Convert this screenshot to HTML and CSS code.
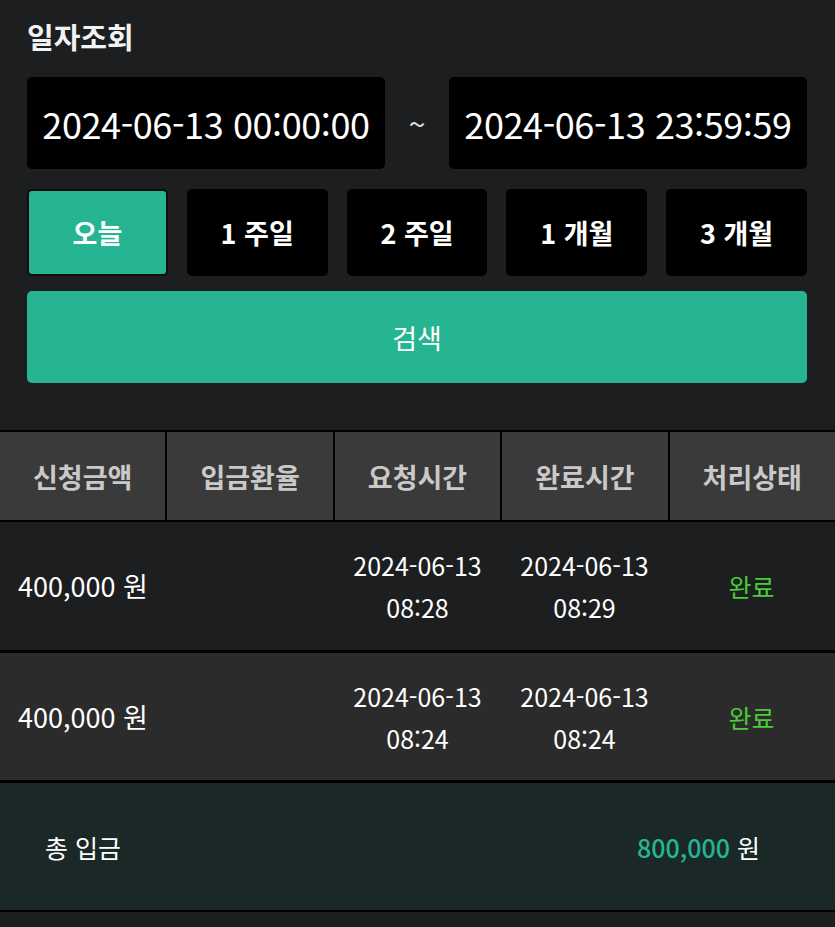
FILE: index.html
```html
<!DOCTYPE html>
<html lang="ko">
<head>
<meta charset="utf-8">
<link rel="stylesheet" href="styles.css">
</head>
<body>
<div class="page">
  <section class="filter">
    <h1 class="title">일자조회</h1>
    <div class="range">
      <div class="date-box">2024-06-13 00:00:00</div>
      <div class="tilde">~</div>
      <div class="date-box">2024-06-13 23:59:59</div>
    </div>
    <div class="periods">
      <button class="period active">오늘</button>
      <button class="period">1 주일</button>
      <button class="period">2 주일</button>
      <button class="period">1 개월</button>
      <button class="period">3 개월</button>
    </div>
    <button class="search">검색</button>
  </section>

  <section class="table">
    <div class="head">
      <div class="hcell">신청금액</div>
      <div class="hcell">입금환율</div>
      <div class="hcell">요청시간</div>
      <div class="hcell">완료시간</div>
      <div class="hcell">처리상태</div>
    </div>
    <div class="row">
      <div class="cell amount">400,000 원</div>
      <div class="cell"></div>
      <div class="cell time">2024-06-13<br>08:28</div>
      <div class="cell time">2024-06-13<br>08:29</div>
      <div class="cell status">완료</div>
    </div>
    <div class="row alt">
      <div class="cell amount">400,000 원</div>
      <div class="cell"></div>
      <div class="cell time">2024-06-13<br>08:24</div>
      <div class="cell time">2024-06-13<br>08:24</div>
      <div class="cell status">완료</div>
    </div>
    <div class="total">
      <div class="total-label">총 입금</div>
      <div class="total-value"><span class="num">800,000</span> 원</div>
    </div>
  </section>
</div>
</body>
</html>
```

FILE: styles.css
```css
* { box-sizing: border-box; }
html, body {
  margin: 0;
  padding: 0;
  background: #1c1e20;
}
body {
  font-family: "Noto Sans CJK KR", "Noto Sans", sans-serif;
  color: #ffffff;
  width: 835px;
  min-height: 927px;
}
.filter {
  padding: 18px 28px 0 27px;
}
.title {
  margin: 0;
  font-size: 29px;
  font-weight: 700;
  line-height: 36px;
  color: #f2f2f2;
}
.range {
  margin-top: 23px;
  display: flex;
  align-items: center;
}
.date-box {
  width: 358px;
  height: 92px;
  background: #000;
  border-radius: 5px;
  display: flex;
  align-items: center;
  justify-content: center;
  font-size: 36px;
  letter-spacing: -0.4px;
  color: #fff;
}
.tilde {
  flex: 1;
  text-align: center;
  font-size: 30px;
  color: #e0e0e0;
}
.periods {
  margin-top: 20px;
  display: grid;
  grid-template-columns: repeat(5, 1fr);
  gap: 19px;
}
.period {
  height: 87px;
  border: 0;
  background: #000;
  border-radius: 5px;
  color: #fff;
  font-family: inherit;
  font-size: 27px;
  font-weight: 700;
  padding: 0;
}
.period.active {
  background: #25b592;
  border: 2px solid #0c0e0e;
}
.search {
  margin-top: 15px;
  width: 100%;
  height: 92px;
  border: 0;
  border-radius: 5px;
  background: #25b592;
  color: #fff;
  font-family: inherit;
  font-size: 27px;
  font-weight: 400;
  padding: 0;
}
.table {
  margin-top: 47px;
  background: #000;
  padding: 2px 0;
  display: flex;
  flex-direction: column;
  gap: 2px;
}
.head {
  display: grid;
  grid-template-columns: repeat(5, 1fr);
  column-gap: 2px;
  height: 88px;
}
.hcell {
  background: #3a3a3a;
  color: #c9c9c9;
  font-size: 27px;
  font-weight: 700;
  display: flex;
  align-items: center;
  justify-content: center;
}
.row {
  display: grid;
  grid-template-columns: repeat(5, 1fr);
  height: 128px;
  background: #1c1e20;
  margin-bottom: 1px;
}
.row.alt {
  background: #2b2b2b;
  height: 127px;
}
.cell {
  display: flex;
  align-items: center;
  justify-content: center;
  text-align: center;
  font-size: 25px;
  line-height: 42px;
  color: #fff;
}
.cell.amount {
  justify-content: flex-start;
  padding-left: 18px;
  font-size: 27px;
}
.cell.status {
  color: #4ccb3a;
  font-size: 25px;
}
.total {
  height: 127px;
  background: #1b2828;
  display: flex;
  align-items: center;
  justify-content: space-between;
  padding: 0 75px 0 45px;
  font-size: 25px;
}
.num {
  color: #25b592;
  font-weight: 500;
}
```
